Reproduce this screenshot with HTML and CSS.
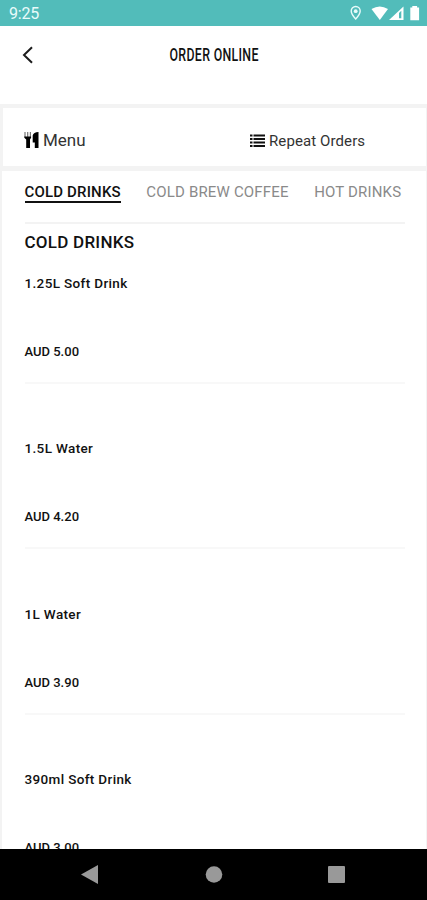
FILE: index.html
```html
<!DOCTYPE html>
<html lang="en">
<head>
    <meta charset="UTF-8">
    <meta name="viewport" content="width=device-width, initial-scale=1.0">
    <title>Order Online</title>

    <link rel="stylesheet" href="styles.css">
</head>
<body>
    <div class="status-bar">
        <span class="time">9:25</span>
        <svg class="status-icons" width="71" height="18" viewBox="0 0 71 18">
            <path d="M5.700 2.500a4.500 4.500 0 0 0-4.500 4.500c0 3.200 4.500 8 4.500 8s4.500-4.800 4.500-8a4.500 4.500 0 0 0-4.500-4.500z" fill="none" stroke="#e9fbfa" stroke-width="1.400"/>
            <circle cx="5.700" cy="7.200" r="1.900" fill="#e9fbfa"/>
            <path d="M21.500 5q8.200-5 16.500 0L29.800 16z" fill="#fff"/>
            <path d="M39 16L53.500 2.500V16z" fill="#fff"/>
            <path d="M49 9l2.300-2.300v7.500H49z" fill="#52bcba"/>
            <path d="M60.300 3.500h2V2h4.800v1.500h2v12.700h-8.800z" fill="#fff"/>
        </svg>
    </div>

    <div class="header">
        <svg class="back" width="12" height="18" viewBox="0 0 12 18">
            <path d="M10 1.200L2 9l8 7.800" fill="none" stroke="#1c1c1c" stroke-width="2"/>
        </svg>
        <h1 class="title">ORDER ONLINE</h1>
    </div>

    <div class="options">
        <div class="option option-menu">
            <svg width="16" height="18" viewBox="0 0 16 18">
                <path d="M1 1v5M3.700 1v5M6.400 1v5" stroke="#777" stroke-width="1.200"/>
                <path d="M.3 5.500h6.800v1.300L6 8.500V17H2.200V8.500L.3 6.800z" fill="#000"/>
                <path d="M14.500 1v16h-3.700v-5.500H8.700V4.500Q9.500 1 14.500 1z" fill="#000"/>
            </svg>
            <span>Menu</span>
        </div>
        <div class="option option-repeat">
            <svg width="15" height="14" viewBox="0 0 15 14">
                <path d="M0 1.500h2.500M3.500 1.500H15M0 5h2.500M3.500 5H15M0 8.500h2.500M3.500 8.500H15M0 12h2.500M3.500 12H15" stroke="#111" stroke-width="2"/>
            </svg>
            <span>Repeat Orders</span>
        </div>
    </div>

    <div class="content">
        <div class="tabs">
            <span class="tab active">COLD DRINKS</span>
            <span class="tab">COLD BREW COFFEE</span>
            <span class="tab">HOT DRINKS</span>
        </div>

        <h2 class="category">COLD DRINKS</h2>

        <div class="item">
            <div class="name">1.25L Soft Drink</div>
            <div class="price">AUD 5.00</div>
        </div>
        <div class="item">
            <div class="name">1.5L Water</div>
            <div class="price">AUD 4.20</div>
        </div>
        <div class="item">
            <div class="name">1L Water</div>
            <div class="price">AUD 3.90</div>
        </div>
        <div class="item">
            <div class="name">390ml Soft Drink</div>
            <div class="price">AUD 3.00</div>
        </div>
    </div>

    <div class="nav-bar">
        <svg width="427" height="51" viewBox="0 0 427 51">
            <path d="M81 25.500L98 16v19z" fill="#999"/>
            <circle cx="214" cy="25.500" r="8.300" fill="#999"/>
            <rect x="328" y="17" width="17" height="17" rx="1" fill="#999"/>
        </svg>
    </div>
</body>
</html>
```

FILE: styles.css
```css
body {
    display: flex;
    flex-direction: column;
    width: 427px;
    height: 900px;
    margin: 0;
    overflow: hidden;
    background-color: #fff;
    font-family: Roboto, "Liberation Sans", sans-serif;
    color: #111;
}

.status-bar {
    display: flex;
    justify-content: space-between;
    align-items: center;
    box-sizing: border-box;
    flex: none;
    height: 26px;
    padding: 0 6px 0 9px;
    background-color: #52bcba;
}

.time {
    font-size: 16px;
    line-height: 28px;
    padding-top: 2px;
    letter-spacing: -0.2px;
    color: #e9fbfa;
}

.header {
    display: grid;
    grid-template-columns: 40px 1fr 40px;
    align-items: center;
    flex: none;
    height: 58px;
    margin-bottom: 20px;
}

.back {
    margin-left: 22px;
}

.title {
    margin: 0;
    padding-left: 2px;
    font-size: 19px;
    line-height: 20px;
    font-weight: 500;
    letter-spacing: 0.5px;
    text-align: center;
    white-space: nowrap;
    transform: scaleX(0.65);
}

.options {
    display: flex;
    box-sizing: border-box;
    flex: none;
    height: 67px;
    border: solid #f3f3f3;
    border-width: 4px 1px 5px 3px;
}

.option {
    display: flex;
    align-items: center;
    padding-top: 7px;
    color: #333;
}

.option-menu {
    width: 226px;
    padding: 6px 0 0 21px;
    box-sizing: border-box;
    gap: 3px;
    font-size: 17px;
}

.option-repeat {
    padding-left: 21px;
    gap: 4px;
    font-size: 15px;
    letter-spacing: 0.1px;
}

.content {
    box-sizing: border-box;
    flex: 1;
    min-height: 0;
    overflow: hidden;
    padding: 0 21px 0 22.500px;
    border-left: 2px solid #f3f3f3;
    border-right: 1px solid #f3f3f3;
}

.tabs {
    display: flex;
    align-items: flex-start;
    gap: 25.500px;
    box-sizing: border-box;
    height: 53px;
    padding-top: 12px;
    border-bottom: 2px solid #f3f3f3;
    white-space: nowrap;
}

.tab {
    font-size: 15px;
    line-height: 18px;
    letter-spacing: 0.17px;
    color: #8a8a8a;
}

.tab.active {
    font-weight: 500;
    color: #111;
    border-bottom: 2px solid #111;
}

.category {
    margin: 8px 0 23px;
    font-size: 17px;
    line-height: 20px;
    font-weight: 500;
    letter-spacing: 0.25px;
}

.item {
    box-sizing: border-box;
    height: 109px;
    margin-bottom: 56.400px;
    border-bottom: 2px solid #f8f8f8;
    font-size: 13px;
    line-height: 16px;
    font-weight: 500;
}

.name {
    margin-bottom: 53px;
    font-size: 13.500px;
    letter-spacing: 0.35px;
}

.nav-bar {
    flex: none;
    height: 51px;
    background-color: #000;
}
```
